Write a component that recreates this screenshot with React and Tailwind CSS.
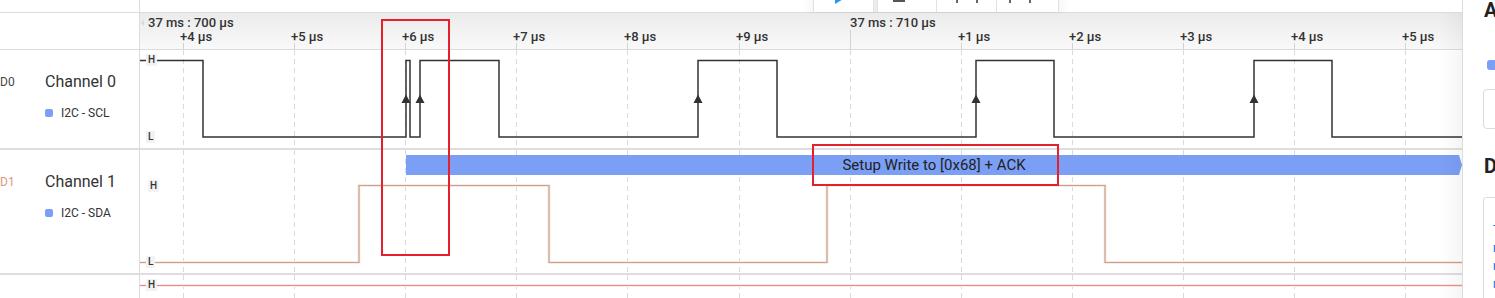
import React from "react";

const X0 = 43;
const STEP = 111.1;
const ticks = Array.from({ length: 12 }, (_, i) => X0 + STEP * i);
const tickLabels = ["+4 µs", "+5 µs", "+6 µs", "+7 µs", "+8 µs", "+9 µs", null, "+1 µs", "+2 µs", "+3 µs", "+4 µs", "+5 µs"];
const W = 1322;

function Grid({ h }) {
  return ticks.map((x, i) => (
    <line key={i} x1={Math.round(x) + 0.5} x2={Math.round(x) + 0.5} y1={0} y2={h} stroke="#dadada" strokeWidth="1" strokeDasharray="5 4" />
  ));
}

function Arrow({ x }) {
  return <polygon points={`${x},44.5 ${x - 4.5},53 ${x + 4.5},53`} fill="#333" />;
}

function Level({ children, className }) {
  return (
    <span className={"absolute px-[2px] bg-[#f2f2f2] text-[10px] leading-[12px] font-medium text-[#333] " + className}>
      {children}
    </span>
  );
}

export default function App() {
  return (
    <div className="relative w-[1495px] h-[298px] overflow-hidden bg-white font-[Roboto,sans-serif] text-[#333] flex">
      <div className="flex flex-col w-[1462px] shrink-0">
        {/* top strip with toolbar */}
        <div className="h-[13px] border-b border-[#dcdcdc] flex shrink-0">
          <div className="w-[140px] shrink-0 border-r border-[#dcdcdc]" />
          <div className="flex-1 flex">
            <div className="ml-[673px] flex h-[12px] bg-[#ececec] shadow-[0_0_14px_rgba(0,0,0,0.12)]">
              <div className="w-[61px] h-full bg-white border-x border-[#e2e2e2] relative overflow-hidden">
                <svg className="absolute left-0 top-0" width="61" height="12">
                  <polygon points="21,-12 21,4 36,-5" fill="#2196f3" />
                </svg>
              </div>
              <div className="ml-[3px] w-[60px] h-full bg-white border-x border-[#e2e2e2] relative overflow-hidden">
                <svg className="absolute left-0 top-0" width="60" height="12">
                  <rect x="15" y="-10" width="12" height="12" fill="#555" />
                </svg>
              </div>
              <div className="w-[60px] h-full bg-white border-r border-[#e2e2e2] relative overflow-hidden">
                <svg className="absolute left-0 top-0" width="60" height="12">
                  <rect x="19" y="-6" width="2" height="9" fill="#666" />
                  <rect x="39" y="-6" width="2" height="9" fill="#666" />
                </svg>
              </div>
              <div className="w-[62px] h-full bg-white border-r border-[#e2e2e2] relative overflow-hidden">
                <svg className="absolute left-0 top-0" width="62" height="12">
                  <rect x="12" y="-6" width="2" height="9" fill="#666" />
                  <rect x="32" y="-6" width="2" height="9" fill="#666" />
                </svg>
              </div>
            </div>
          </div>
        </div>

        {/* time header */}
        <div className="h-[37px] border-b border-[#dcdcdc] flex shrink-0">
          <div className="w-[140px] shrink-0 border-r border-[#dcdcdc]" />
          <div className="relative flex-1 bg-gradient-to-b from-[#ebebeb] to-[#f9f9f9]">
            <svg className="absolute left-0 top-0" width={W} height="36">
              {ticks.map((x, i) => (
                <line key={i} x1={Math.round(x) + 0.5} x2={Math.round(x) + 0.5} y1={i === 6 ? 17 : 30} y2={36} stroke="#d2d2d2" strokeWidth="1" />
              ))}
              <polygon points="1,10 4,7 4,13" fill="#d8d8d8" />
            </svg>
            <span className="absolute left-[8px] top-[2px] text-[13px] leading-[16px] font-medium text-[#333] whitespace-nowrap">37 ms : 700 µs</span>
            <span className="absolute left-[710px] top-[2px] text-[13px] leading-[16px] font-medium text-[#333] whitespace-nowrap">37 ms : 710 µs</span>
            {ticks.map((x, i) =>
              tickLabels[i] ? (
                <span key={i} className="absolute top-[16px] text-[13px] leading-[16px] font-medium text-[#333] whitespace-nowrap" style={{ left: Math.round(x) - 3 }}>
                  {tickLabels[i]}
                </span>
              ) : null
            )}
          </div>
        </div>

        {/* Channel 0 */}
        <div className="h-[100px] border-b-2 border-[#dedede] flex shrink-0">
          <div className="w-[140px] shrink-0 border-r border-[#dcdcdc] flex pt-[22px]">
            <div className="w-[45px] text-[12px] leading-[20px] text-[#444]">D0</div>
            <div>
              <div className="text-[16px] leading-[20px] text-[#333]">Channel 0</div>
              <div className="mt-[13px] flex items-center gap-[8px] text-[12px] leading-[16px] text-[#333]">
                <span className="w-[8px] h-[8px] rounded-[2px] bg-[#7b9ff5]" />
                I2C - SCL
              </div>
            </div>
          </div>
          <div className="relative flex-1">
            <svg className="absolute left-0 top-0" width={W} height="98">
              <Grid h={98} />
              <path d="M0 10.5 H63 V87 H266 V10.5 H270 V87 H280 V10.5 H359 V87 H558 V10.5 H637 V87 H836 V10.5 H914 V87 H1114 V10.5 H1192 V87 H1322" fill="none" stroke="#333" strokeWidth="1.5" />
              <Arrow x={266} />
              <Arrow x={280} />
              <Arrow x={558} />
              <Arrow x={836} />
              <Arrow x={1114} />
            </svg>
            <Level className="left-[6px] top-[4px]">H</Level>
            <Level className="left-[6px] top-[81px]">L</Level>
          </div>
        </div>

        {/* Channel 1 */}
        <div className="h-[125px] border-b-2 border-[#dedede] flex shrink-0">
          <div className="w-[140px] shrink-0 border-r border-[#dcdcdc] flex pt-[22px]">
            <div className="w-[45px] text-[12px] leading-[20px] text-[#d9997d]">D1</div>
            <div>
              <div className="text-[16px] leading-[20px] text-[#333]">Channel 1</div>
              <div className="mt-[13px] flex items-center gap-[8px] text-[12px] leading-[16px] text-[#333]">
                <span className="w-[8px] h-[8px] rounded-[2px] bg-[#7b9ff5]" />
                I2C - SDA
              </div>
            </div>
          </div>
          <div className="relative flex-1">
            <svg className="absolute left-0 top-0" width={W} height="123">
              <Grid h={123} />
              <path d="M0 112.5 H219 V35.5 H409 V112.5 H687 V35.5 H965 V112.5 H1322" fill="none" stroke="#f7ece6" strokeWidth="3" />
              <path d="M0 112.5 H219 V35.5 H409 V112.5 H687 V35.5 H965 V112.5 H1322" fill="none" stroke="#c99f8a" strokeWidth="1.2" />
            </svg>
            <div className="absolute left-[266px] right-0 top-[5px] h-[20px] bg-[#7b9ff5] flex items-center justify-center [clip-path:polygon(0_0,calc(100%-3px)_0,100%_50%,calc(100%-3px)_100%,0_100%)]">
              <span className="text-[15px] leading-[18px] text-[#222] whitespace-nowrap">Setup Write to [0x68] + ACK</span>
            </div>
            <Level className="left-[8px] top-[30px]">H</Level>
            <Level className="left-[6px] top-[106px]">L</Level>
          </div>
        </div>

        {/* Channel 2 (partial) */}
        <div className="flex-1 flex">
          <div className="w-[140px] shrink-0 border-r border-[#dcdcdc]" />
          <div className="relative flex-1">
            <svg className="absolute left-0 top-0" width={W} height="24">
              <Grid h={24} />
              <line x1="0" x2={W} y1="10.5" y2="10.5" stroke="#fcebeb" strokeWidth="3" />
              <line x1="0" x2={W} y1="10.5" y2="10.5" stroke="#ef8a8a" strokeWidth="1.2" />
            </svg>
            <Level className="left-[6px] top-[4px]">H</Level>
          </div>
        </div>
      </div>

      {/* right panel */}
      <div className="flex-1 border-l border-[#dcdcdc] pl-[21px] overflow-hidden">
        <div className="text-[20px] leading-[20px] font-bold text-[#222]">A</div>
        <div className="mt-[40px] ml-[3px] w-[20px] h-[10px] rounded-[3px] bg-[#7b9ff5]" />
        <div className="mt-[19px] -ml-[1px] w-[40px] h-[40px] rounded-[4px] border border-[#dcdcdc]" />
        <div className="mt-[27px] text-[20px] leading-[20px] font-bold text-[#222]">D</div>
        <div className="mt-[21px] -ml-[1px] w-[40px] h-[120px] rounded-[3px] border border-[#dcdcdc] pt-[23px] pl-[9px] text-[12px] leading-[18px] text-[#1565d8] whitespace-nowrap">
          <div>Type</div>
          <div>rate</div>
          <div>rate</div>
          <div>rate</div>
        </div>
      </div>

      {/* right-edge shadow over canvas */}
      <div className="absolute left-[1440px] top-[13px] w-[22px] h-[285px] bg-gradient-to-r from-transparent to-[rgba(0,0,0,0.04)] pointer-events-none" />

      {/* red annotation rectangles */}
      <div className="absolute left-[381px] top-[19px] w-[69px] h-[237px] border-2 border-[#e4212a] pointer-events-none" />
      <div className="absolute left-[812px] top-[144px] w-[247px] h-[42px] border-2 border-[#e4212a] pointer-events-none" />
    </div>
  );
}
